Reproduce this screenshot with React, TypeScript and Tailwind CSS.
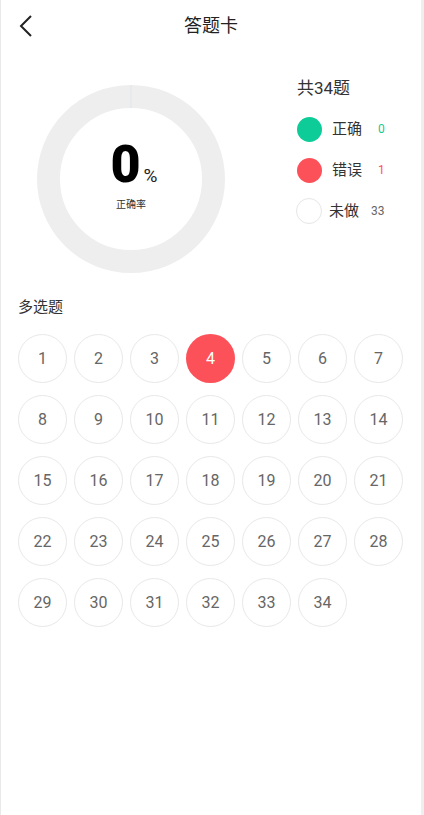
import React from 'react';

const font = { fontFamily: 'Roboto, "Noto Sans CJK SC", sans-serif' };

function Donut() {
  return (
    <div className="relative w-[188px] h-[188px]">
      <svg width="188" height="188" viewBox="0 0 188 188">
        <circle cx="94" cy="94" r="82.5" fill="none" stroke="#eeeeee" strokeWidth="23" />
        <line x1="94" y1="0" x2="94" y2="23" stroke="#dfe6ea" strokeWidth="1" />
      </svg>
      <div className="absolute inset-0 flex flex-col items-center justify-center pb-[10px]">
        <div className="flex items-baseline pl-[6px]">
          <span className="text-[52px] leading-none font-black text-black">0</span>
          <span className="text-[19px] leading-none text-[#222] ml-[3px]">%</span>
        </div>
        <span className="text-[10px] leading-none text-[#333] mt-[9px]">正确率</span>
      </div>
    </div>
  );
}

function Legend({ color, label, value, valueColor, empty }: { color: string; label: string; value: string; valueColor: string; empty?: boolean }) {
  return (
    <div className="flex items-center h-[24px]">
      {empty ? (
        <div className="w-[26px] h-[26px] rounded-full border border-[#e6e6e6] -ml-[1px]" />
      ) : (
        <div className={`w-[25px] h-[25px] rounded-full ${color}`} />
      )}
      <span className={`text-[15px] text-[#333] ${empty ? 'ml-[7px]' : 'ml-[10px]'}`}>{label}</span>
      <span className={`text-[12px] ${valueColor} ${empty ? 'ml-[12px]' : 'ml-[16px]'}`}>{value}</span>
    </div>
  );
}

export default function App() {
  const nums = Array.from({ length: 34 }, (_, i) => i + 1);
  return (
    <div className="w-[424px] h-[815px] flex bg-[#efefef]" style={font}>
      <div className="w-[1px] bg-[#e9e9e9]" />
      <div className="w-[420px] bg-white flex flex-col">
        <div className="relative h-[50px] flex items-center justify-center">
          <svg className="absolute left-[18px] top-[14px]" width="14" height="24" viewBox="0 0 14 24">
            <path d="M12 2 L2 12 L12 22" fill="none" stroke="#222" strokeWidth="2" />
          </svg>
          <span className="text-[18px] text-[#222]">答题卡</span>
        </div>

        <div className="flex mt-[28px]">
          <div className="ml-[36px] mt-[7px]">
            <Donut />
          </div>
          <div className="ml-[72px] flex flex-col">
            <span className="text-[17px] leading-[20px] text-[#333]">共34题</span>
            <div className="mt-[19px] flex flex-col gap-[17px]">
              <Legend color="bg-[#0dcc98]" label="正确" value="0" valueColor="text-[#0dcc98]" />
              <Legend color="bg-[#fc5158]" label="错误" value="1" valueColor="text-[#fc5158]" />
              <Legend color="" label="未做" value="33" valueColor="text-[#666]" empty />
            </div>
          </div>
        </div>

        <div className="pl-[17px] mt-[22px]">
          <span className="text-[15px] leading-[20px] text-[#333]">多选题</span>
        </div>

        <div className="pl-[17px] mt-[15px] grid grid-cols-[repeat(7,49px)] gap-x-[7px] gap-y-[12px]">
          {nums.map((n) =>
            n === 4 ? (
              <div key={n} className="w-[49px] h-[49px] rounded-full bg-[#fc5158] flex items-center justify-center text-[16px] text-white">
                {n}
              </div>
            ) : (
              <div key={n} className="w-[49px] h-[49px] rounded-full border border-[#e8e8e8] flex items-center justify-center text-[16px] text-[#666]">
                {n}
              </div>
            )
          )}
        </div>
      </div>
      <div className="w-[3px] bg-[#efefef]" />
    </div>
  );
}
